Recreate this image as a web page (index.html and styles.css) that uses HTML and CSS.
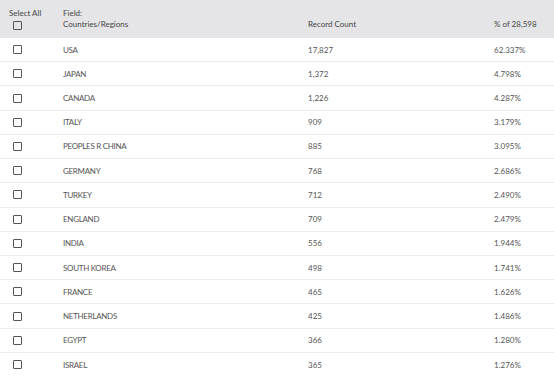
FILE: index.html
```html
<!DOCTYPE html>
<html>
<head>
<meta charset="utf-8">
<link rel="stylesheet" href="styles.css">
</head>
<body>
<div class="table">
  <div class="row head">
    <div class="c-sel">
      <div class="sel-label">Select All</div>
      <span class="box"></span>
    </div>
    <div class="c-name">Field:<br>Countries/Regions</div>
    <div class="c-count">Record Count</div>
    <div class="c-pct">% of 28,598</div>
  </div>
  <div class="row"><div class="c-sel"><span class="box"></span></div><div class="c-name">USA</div><div class="c-count">17,827</div><div class="c-pct">62.337%</div></div>
  <div class="row"><div class="c-sel"><span class="box"></span></div><div class="c-name">JAPAN</div><div class="c-count">1,372</div><div class="c-pct">4.798%</div></div>
  <div class="row"><div class="c-sel"><span class="box"></span></div><div class="c-name">CANADA</div><div class="c-count">1,226</div><div class="c-pct">4.287%</div></div>
  <div class="row"><div class="c-sel"><span class="box"></span></div><div class="c-name">ITALY</div><div class="c-count">909</div><div class="c-pct">3.179%</div></div>
  <div class="row"><div class="c-sel"><span class="box"></span></div><div class="c-name">PEOPLES R CHINA</div><div class="c-count">885</div><div class="c-pct">3.095%</div></div>
  <div class="row"><div class="c-sel"><span class="box"></span></div><div class="c-name">GERMANY</div><div class="c-count">768</div><div class="c-pct">2.686%</div></div>
  <div class="row"><div class="c-sel"><span class="box"></span></div><div class="c-name">TURKEY</div><div class="c-count">712</div><div class="c-pct">2.490%</div></div>
  <div class="row"><div class="c-sel"><span class="box"></span></div><div class="c-name">ENGLAND</div><div class="c-count">709</div><div class="c-pct">2.479%</div></div>
  <div class="row"><div class="c-sel"><span class="box"></span></div><div class="c-name">INDIA</div><div class="c-count">556</div><div class="c-pct">1.944%</div></div>
  <div class="row"><div class="c-sel"><span class="box"></span></div><div class="c-name">SOUTH KOREA</div><div class="c-count">498</div><div class="c-pct">1.741%</div></div>
  <div class="row"><div class="c-sel"><span class="box"></span></div><div class="c-name">FRANCE</div><div class="c-count">465</div><div class="c-pct">1.626%</div></div>
  <div class="row"><div class="c-sel"><span class="box"></span></div><div class="c-name">NETHERLANDS</div><div class="c-count">425</div><div class="c-pct">1.486%</div></div>
  <div class="row"><div class="c-sel"><span class="box"></span></div><div class="c-name">EGYPT</div><div class="c-count">366</div><div class="c-pct">1.280%</div></div>
  <div class="row"><div class="c-sel"><span class="box"></span></div><div class="c-name">ISRAEL</div><div class="c-count">365</div><div class="c-pct">1.276%</div></div>
</div>
</body>
</html>
```
FILE: styles.css
```css
html, body {
  margin: 0;
  padding: 0;
  background: #fff;
}
body {
  font-family: Lato, "Liberation Sans", sans-serif;
  font-size: 8px;
  color: #555;
}
.table {
  display: flex;
  flex-direction: column;
}
.row {
  display: grid;
  grid-template-columns: 63px 245px 186px 1fr;
  align-items: center;
  height: 24.23px;
  box-sizing: border-box;
  border-bottom: 1px solid #ececec;
}
.row:last-child {
  border-bottom: none;
}
.row .c-name {
  letter-spacing: -0.3px;
}
.row.head {
  height: 38px;
  background: #e5e5e7;
  border-bottom: none;
  align-items: start;
  padding-top: 8px;
  line-height: 11px;
  color: #444;
}
.row.head .c-name {
  letter-spacing: 0;
}
.head .c-count,
.head .c-pct {
  margin-top: 11px;
}
.c-sel {
  display: flex;
  flex-direction: column;
  align-items: flex-start;
  padding-left: 13px;
}
.sel-label {
  margin-left: -4px;
  margin-bottom: 2px;
}
.box {
  display: block;
  width: 7px;
  height: 7px;
  border: 1px solid #555;
  border-radius: 1px;
  background: #fff;
}
.head .box {
  background: transparent;
}
```
